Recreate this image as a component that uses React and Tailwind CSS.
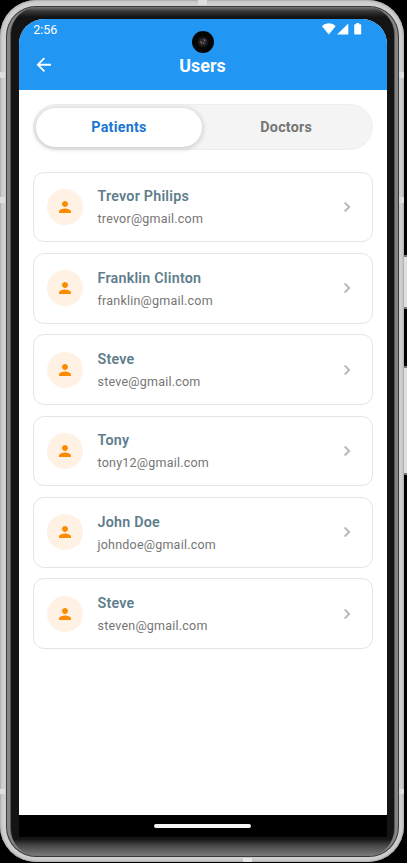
import React from "react";

const users = [
  { name: "Trevor Philips", email: "trevor@gmail.com" },
  { name: "Franklin Clinton", email: "franklin@gmail.com" },
  { name: "Steve", email: "steve@gmail.com" },
  { name: "Tony", email: "tony12@gmail.com" },
  { name: "John Doe", email: "johndoe@gmail.com" },
  { name: "Steve", email: "steven@gmail.com" },
];

function StatusIcons() {
  return (
    <div className="-mt-[1.5px] flex items-center text-white">
      <svg width="14" height="12" viewBox="0 0 14 12" fill="currentColor">
        <path d="M0 3.2C4 -.6 10 -.6 13.6 3.2L6.8 11.5Z" />
      </svg>
      <svg width="12" height="12" viewBox="0 0 12 12" fill="currentColor" className="ml-[0.5px]">
        <path d="M11.3 .4V11.5H0Z" />
      </svg>
      <svg width="8" height="12" viewBox="0 0 8 12" fill="currentColor" className="ml-[5px]">
        <path d="M2.2 0h3v1.2h1.2q.8 0 .8.8v8.7q0 .8-.8.8H1q-.8 0-.8-.8V2q0-.8.8-.8h1.2z" />
      </svg>
    </div>
  );
}

function Header() {
  return (
    <header className="relative h-[71px] shrink-0 bg-[#2196f3] text-white">
      <div className="flex h-[21px] items-center justify-between pl-[14.2px] pr-[25.5px]">
        <span className="text-[12.5px] leading-[21px]">2:56</span>
        <StatusIcons />
      </div>
      <div className="grid h-[50px] grid-cols-[48px_1fr_49px] items-center">
        <svg width="21.5" height="21.5" viewBox="0 0 24 24" fill="currentColor" className="ml-[14px]">
          <path d="M20 11H7.83l5.59-5.59L12 4l-8 8 8 8 1.41-1.41L7.83 13H20v-2z" />
        </svg>
        <h1 className="pt-[2px] text-center text-[17.9px] font-bold leading-[48px]">Users</h1>
      </div>
      <div className="absolute left-[173px] top-[11.5px] flex size-[22px] items-center justify-center rounded-full bg-[#050506]">
        <svg width="14" height="14" viewBox="0 0 14 14">
          <circle cx="7" cy="7" r="5.5" fill="#151517" />
          <circle cx="7" cy="7" r="3.8" fill="#2c262c" />
          <path d="M4.8 6l.8 2.6" stroke="#7a6a38" strokeWidth="1.3" />
          <path d="M8 4.4l1.2 1.4M7 8.2l1.2-.6" stroke="#8d758d" strokeWidth="1.2" />
        </svg>
      </div>
    </header>
  );
}

function Tabs() {
  return (
    <div className="flex h-[46px] shrink-0 rounded-full border border-[#eeeeee] bg-[#f4f4f4] p-[2.5px] pl-[2px] text-[14.3px] font-bold tracking-[0.27px]">
      <div className="flex w-[166px] items-center justify-center rounded-full bg-white pl-px pt-[2px] text-[#1976d2] shadow-[0_1px_5px_1px_rgba(0,0,0,0.16)]">
        Patients
      </div>
      <div className="flex flex-1 items-center justify-center pl-[2px] pt-[2px] text-[#757575]">Doctors</div>
    </div>
  );
}

function UserCard({ name, email }) {
  return (
    <li className="flex h-[70.7px] items-center rounded-[11px] border border-[#e5e5e5] bg-white pl-[13px] pr-[14.5px]">
      <div className="flex size-[36px] shrink-0 items-center justify-center rounded-full bg-[#fff2e4]">
        <svg width="18" height="18" viewBox="0 0 24 24" fill="#fb8c00">
          <path d="M12 12c2.21 0 4-1.79 4-4s-1.79-4-4-4-4 1.79-4 4 1.79 4 4 4zm0 2c-2.67 0-8 1.34-8 4v2h16v-2c0-2.66-5.33-4-8-4z" />
        </svg>
      </div>
      <div className="ml-[15px] flex-1 pt-[2px]">
        <div className="text-[14.3px] font-semibold leading-[22px] tracking-[0.22px] text-[#607d8b]">{name}</div>
        <div className="text-[12.5px] leading-[23px] tracking-[0.22px] text-[#757575]">{email}</div>
      </div>
      <svg width="20" height="20" viewBox="0 0 24 24" fill="#b5b5b5" stroke="#b5b5b5" strokeWidth="0.4">
        <path d="M10 6L8.59 7.41 13.17 12l-4.58 4.59L10 18l6-6z" />
      </svg>
    </li>
  );
}

/* Antenna breaks in the metal rim. */
function AntennaLines() {
  return (
    <>
      <div className="absolute left-0 top-[72px] h-[6px] w-[5px] bg-[#dedede]" />
      <div className="absolute left-0 top-[197px] h-[6px] w-[5px] bg-[#dedede]" />
      <div className="absolute left-0 top-[789px] h-[5px] w-[5px] bg-[#dedede]" />
      <div className="absolute right-0 top-[72px] h-[6px] w-[5px] bg-[#dedede]" />
      <div className="absolute right-0 top-[197px] h-[6px] w-[5px] bg-[#dedede]" />
      <div className="absolute right-0 top-[789px] h-[5px] w-[5px] bg-[#dedede]" />
      <div className="absolute left-[198px] top-0 h-[5px] w-[9px] bg-[#dedede]" />
      <div className="absolute bottom-0 left-[243px] h-[4px] w-[9px] bg-[#e8e8e8]" />
    </>
  );
}

export default function App() {
  return (
    <div className="relative h-[863px] w-[407px] overflow-hidden bg-black font-[Roboto,sans-serif]">
      <div className="absolute right-0 top-[255px] h-[54px] w-[4px] border-y-2 border-[#777] bg-[#dedede]" />
      <div className="absolute right-0 top-[366px] h-[109px] w-[4px] border-y-2 border-[#777] bg-[#dedede]" />
      <div className="relative h-[862px] w-[404px] rounded-[36px] bg-[#cfcfcf] p-[5.5px] shadow-[inset_0_0_2px_1px_#aaa]">
        <AntennaLines />
        <div className="h-full rounded-[30px] bg-[#3b3b3b] p-px">
          <div className="h-full rounded-[29px] bg-[#858585] px-[3px]">
            <div className="h-full rounded-[28px] bg-[#555] px-px">
              <div className="h-full rounded-[27px] bg-[linear-gradient(#777_0,#3a3a3a_4px,#141414_10px,#141414_832px,#444_838px,#777_848px)] px-[8.5px] pb-[18px] pt-[12.5px]">
                <main className="flex h-[818px] w-[368px] flex-col overflow-hidden rounded-t-[25px] bg-white">
                  <Header />
                  <section className="flex flex-1 flex-col pl-[13.5px] pr-[14.5px] pt-[14px]">
                    <Tabs />
                    <ul className="mt-[21.5px] flex flex-col gap-[10.7px]">
                      {users.map((user) => (
                        <UserCard key={user.email} {...user} />
                      ))}
                    </ul>
                  </section>
                  <footer className="flex h-[22px] shrink-0 items-center justify-center bg-black pr-px">
                    <div className="h-[4px] w-[97px] rounded-full bg-[#f4f4f4]" />
                  </footer>
                </main>
              </div>
            </div>
          </div>
        </div>
      </div>
    </div>
  );
}
